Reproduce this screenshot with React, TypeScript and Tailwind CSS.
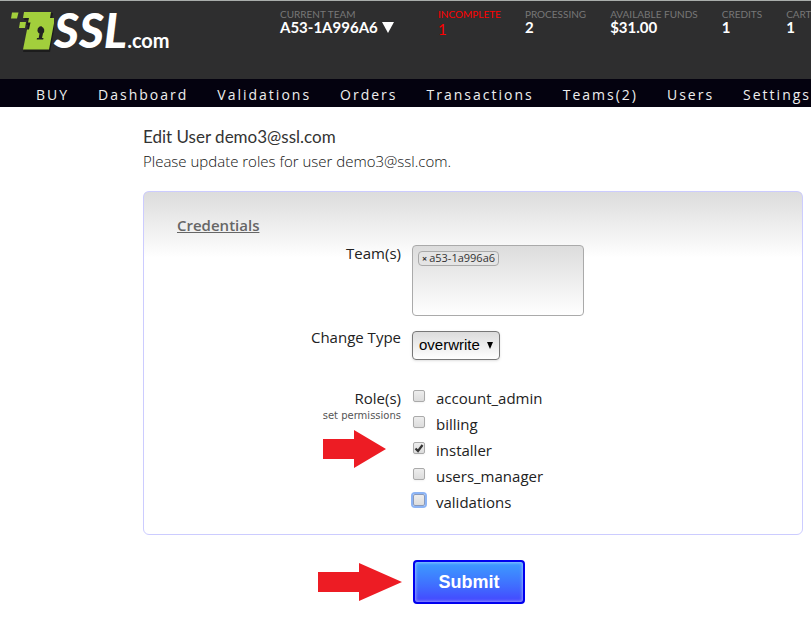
const accountStats = [
  { label: 'INCOMPLETE', value: '1', alert: true },
  { label: 'PROCESSING', value: '2' },
  { label: 'AVAILABLE FUNDS', value: '$31.00' },
  { label: 'CREDITS', value: '1' },
  { label: 'CART', value: '1' },
];

const navItems = ['BUY', 'Dashboard', 'Validations', 'Orders', 'Transactions', 'Teams(2)', 'Users', 'Settings'];

const roles = [
  { id: 'account_admin' },
  { id: 'billing' },
  { id: 'installer', checked: true, marked: true },
  { id: 'users_manager' },
  { id: 'validations', focused: true },
];

export default function App() {
  return (
    <div className="overflow-x-hidden bg-white font-['Open_Sans','Liberation_Sans',sans-serif] text-[15px] text-[#333]">
      <Header />
      <NavBar />
      <main className="pt-5 pr-2 pb-3 pl-[143px]">
        <h1 className="font-['Lato',sans-serif] text-[17px] leading-5 text-[#333]">Edit User demo3@ssl.com</h1>
        <p className="mt-1 leading-5 font-light text-[#111]">Please update roles for user demo3@ssl.com.</p>
        <form onSubmit={(e) => e.preventDefault()}>
          <Credentials />
          <div className="mt-[25px] grid grid-cols-[259px_1fr] items-center gap-[11px]">
            <Arrow className="h-[38px] w-[84px] justify-self-end" points="0,9 41,9 41,0 84,19 41,38 41,29 0,29" />
            <button
              type="submit"
              className="h-11 w-28 rounded-sm border-2 border-[#0000ee] bg-linear-to-b from-[#3d9cff] to-[#4444ff] font-['Liberation_Sans',sans-serif] text-lg font-bold text-white shadow-[inset_0_0_3px_1px_rgba(255,255,255,0.4)]"
            >
              Submit
            </button>
          </div>
        </form>
      </main>
    </div>
  );
}

function Header() {
  return (
    <header className="flex h-[79px] border-t border-[#a9adab] bg-[#2e2e2f] font-['Lato',sans-serif]">
      <a href="#home" className="flex w-[280px] shrink-0 items-start pt-2 pl-2 text-white">
        <svg viewBox="0 0 48 44" className="h-11 w-[46px] shrink-0" preserveAspectRatio="xMinYMin slice" aria-hidden="true">
          <path d="M4 3.500h6.500l-1.500 6H3z" fill="#a2cf3c" />
          <path d="M12 13h6l-1 6h-6z" fill="#a2cf3c" />
          <path d="M19 4h26l-1 6h4l-6 33H15l5-27h-2l2-5h-4z" fill="#111" opacity=".6" />
          <path d="M16 3h27l-1 6h5l-6 31.500H15l4-20h2l1.500-7H20l1-4.500h-6z" fill="#a2cf3c" />
          <path d="M33.500 17a4.200 4.200 0 0 0-3 7l1 .5-.8 4.500H29l-.3 1.500h6.500l.3-1.500H34l1-4.500a4.200 4.200 0 0 0-1.500-7z" fill="#222" />
        </svg>
        <span className="flex items-baseline">
          <span className="text-5xl leading-[42px] font-black italic">SSL</span>
          <span className="text-xl font-bold">.com</span>
        </span>
      </a>
      <button type="button" className="mr-11 flex w-[114px] shrink-0 flex-col items-start pt-[7px] text-left">
        <span className="text-[10px] leading-3 text-[#777]">CURRENT TEAM</span>
        <span className="flex items-center gap-1 text-[15px] leading-[14px] font-bold whitespace-nowrap text-white">
          A53-1A996A6
          <svg viewBox="0 0 12 12" className="size-3 shrink-0" aria-hidden="true">
            <path d="M0 1h12L6 12z" fill="#fff" />
          </svg>
        </span>
      </button>
      <dl className="flex gap-6 pt-[7px]">
        {accountStats.map((stat) => (
          <div key={stat.label} className={`shrink-0 ${stat.alert ? 'text-[#f00]' : 'text-[#777]'}`}>
            <dt className="text-[10px] leading-3 whitespace-nowrap">{stat.label}</dt>
            <dd className={`text-[15px] leading-[14px] ${stat.alert ? 'pt-0.5' : 'font-bold text-white'}`}>{stat.value}</dd>
          </div>
        ))}
      </dl>
    </header>
  );
}

function NavBar() {
  return (
    <nav className="flex h-7 items-center gap-[29px] bg-[#04020f] pt-1 pl-9 font-['Open_Sans',sans-serif] text-sm tracking-[2px] text-[#eee]">
      {navItems.map((item) => (
        <a key={item} href="#nav" className="shrink-0 leading-6">
          {item}
        </a>
      ))}
    </nav>
  );
}

function Credentials() {
  return (
    <fieldset className="mt-5 rounded-md border border-[#ccccff] bg-[linear-gradient(to_bottom,#dcdcdc,#ffffff_66px)] pt-[23px] pr-4 pb-4 pl-[33px]">
      <h2 className="text-[15px] leading-5 font-semibold text-[#666] underline">Credentials</h2>
      <div className="mt-2.5 grid grid-cols-[224px_1fr] gap-x-[11px] gap-y-[15px] text-[#222]">
        <label htmlFor="teams" className="text-right leading-4">
          Team(s)
        </label>
        <div className="flex h-[71px] w-[172px] items-start rounded-sm border border-[#aaa] bg-linear-to-b from-[#dcdcdc] to-white p-[5px]">
          <span className="flex h-[15px] shrink-0 items-center gap-0.5 rounded-sm border border-[#aaa] bg-[#e4e4e4] px-[3px] text-[11px] text-[#333]">
            <button type="button" aria-label="Remove a53-1a996a6" className="text-[9px] leading-3 font-bold">
              ×
            </button>
            a53-1a996a6
          </span>
          <input id="teams" type="text" className="ml-1 w-0 grow bg-transparent text-[11px] outline-none" />
        </div>

        <label htmlFor="change-type" className="text-right leading-3">
          Change Type
        </label>
        <div className="grid w-[88px] items-center">
          <select
            id="change-type"
            defaultValue="overwrite"
            className="col-start-1 row-start-1 h-[29px] appearance-none rounded-sm border border-[#777] bg-linear-to-b from-[#dcdcdc] to-white pl-1.5 font-['Liberation_Sans',sans-serif] text-[15px] text-black shadow-sm"
          >
            <option>overwrite</option>
          </select>
          <svg viewBox="0 0 8 8" className="pointer-events-none col-start-1 row-start-1 mr-1.5 size-2 justify-self-end" aria-hidden="true">
            <path d="M1 0h6L4 7z" fill="#000" />
          </svg>
        </div>

        <div className="mt-[13px] text-right">
          <div className="leading-5">Role(s)</div>
          <a href="#permissions" className="block font-['DejaVu_Sans',sans-serif] text-[10px] leading-4 text-[#555]">
            set permissions
          </a>
        </div>
        <div className="mt-[13px]">
          {roles.map((role) => (
            <RoleOption key={role.id} {...role} />
          ))}
        </div>
      </div>
    </fieldset>
  );
}

function RoleOption({ id, checked, focused, marked }: { id: string; checked?: boolean; focused?: boolean; marked?: boolean }) {
  return (
    <div className="relative flex h-[26px] items-start">
      {marked && (
        <Arrow className="absolute top-[-10px] right-full mr-[26px] h-[38px] w-[63px]" points="0,9 31,9 31,0 63,19 31,38 31,29 0,29" />
      )}
      <span className="mt-0.5 mr-[11px] ml-px grid place-items-center">
        <input
          id={id}
          type="checkbox"
          defaultChecked={checked}
          className={`peer col-start-1 row-start-1 size-3 appearance-none rounded-xs border bg-linear-to-b from-[#ededed] to-[#dcdcdc] ${
            focused ? 'border-[#8899bb] ring-2 ring-[#8cb4f5]' : 'border-[#aaa] shadow-xs'
          }`}
        />
        <svg viewBox="0 0 12 12" className="pointer-events-none invisible col-start-1 row-start-1 size-3 peer-checked:visible" aria-hidden="true">
          <path d="M2.500 6.500l2.500 2.500L9.500 3" fill="none" stroke="#333" strokeWidth="2.200" />
        </svg>
      </span>
      <label htmlFor={id} className="leading-5">
        {id}
      </label>
    </div>
  );
}

function Arrow({ points, className }: { points: string; className: string }) {
  return (
    <svg className={className} aria-hidden="true">
      <polygon points={points} fill="#ed1c24" />
    </svg>
  );
}
